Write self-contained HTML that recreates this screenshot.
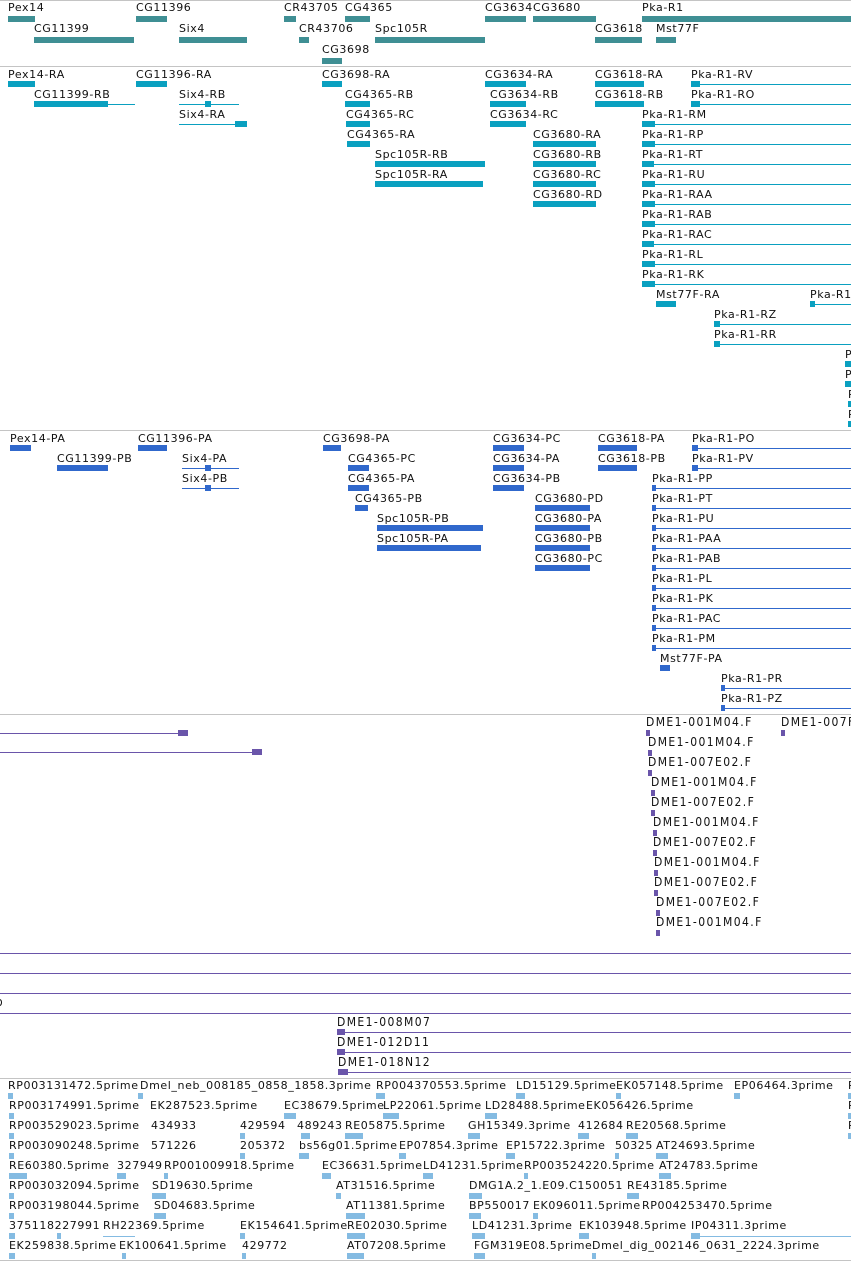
<!DOCTYPE html>
<html><head><meta charset="utf-8"><style>
body{margin:0;width:851px;height:1262px;overflow:hidden;background:#fff;position:relative;font-family:"DejaVu Sans","Liberation Sans",sans-serif}
.t{position:absolute;font-size:11px;line-height:14px;letter-spacing:.6px;color:#111;white-space:nowrap}
.d{position:absolute;font-family:"DejaVu Sans Condensed","DejaVu Sans",sans-serif;font-stretch:condensed;font-size:12px;line-height:14px;letter-spacing:1.4px;color:#111;white-space:nowrap}
.b{position:absolute;height:6px}
.l{position:absolute;height:1px}
.h{position:absolute;left:0;width:851px;height:1px;background:#c4c4c4}
.g{background:#3f8f94}.c{background:#0aa0c0}.p{background:#3068cc}.u{background:#6a55aa}.e{background:#84bbe2}
</style></head><body>
<div class="h" style="top:0"></div>
<div class="h" style="top:66px"></div>
<div class="h" style="top:430px"></div>
<div class="h" style="top:714px"></div>
<div class="h" style="top:1078px"></div>
<div class="h" style="top:1260px"></div>

<div class="t" style="left:8px;top:1px">Pex14</div><div class="b g" style="left:8px;top:16px;width:27px"></div>
<div class="t" style="left:136px;top:1px">CG11396</div><div class="b g" style="left:136px;top:16px;width:31px"></div>
<div class="t" style="left:284px;top:1px">CR43705</div><div class="b g" style="left:284px;top:16px;width:12px"></div>
<div class="t" style="left:345px;top:1px">CG4365</div><div class="b g" style="left:345px;top:16px;width:25px"></div>
<div class="t" style="left:485px;top:1px">CG3634</div><div class="b g" style="left:485px;top:16px;width:41px"></div>
<div class="t" style="left:533px;top:1px">CG3680</div><div class="b g" style="left:533px;top:16px;width:63px"></div>
<div class="t" style="left:642px;top:1px">Pka-R1</div><div class="b g" style="left:642px;top:16px;width:209px"></div>
<div class="t" style="left:34px;top:22px">CG11399</div><div class="b g" style="left:34px;top:37px;width:100px"></div>
<div class="t" style="left:179px;top:22px">Six4</div><div class="b g" style="left:179px;top:37px;width:68px"></div>
<div class="t" style="left:299px;top:22px">CR43706</div><div class="b g" style="left:299px;top:37px;width:10px"></div>
<div class="t" style="left:375px;top:22px">Spc105R</div><div class="b g" style="left:375px;top:37px;width:110px"></div>
<div class="t" style="left:595px;top:22px">CG3618</div><div class="b g" style="left:595px;top:37px;width:47px"></div>
<div class="t" style="left:656px;top:22px">Mst77F</div><div class="b g" style="left:656px;top:37px;width:20px"></div>
<div class="t" style="left:322px;top:43px">CG3698</div><div class="b g" style="left:322px;top:58px;width:20px"></div>

<div class="t" style="left:8px;top:68px">Pex14-RA</div><div class="b c" style="left:8px;top:81px;width:27px"></div>
<div class="t" style="left:136px;top:68px">CG11396-RA</div><div class="b c" style="left:136px;top:81px;width:31px"></div>
<div class="t" style="left:322px;top:68px">CG3698-RA</div><div class="b c" style="left:322px;top:81px;width:20px"></div>
<div class="t" style="left:485px;top:68px">CG3634-RA</div><div class="b c" style="left:485px;top:81px;width:41px"></div>
<div class="t" style="left:595px;top:68px">CG3618-RA</div><div class="b c" style="left:595px;top:81px;width:49px"></div>
<div class="t" style="left:691px;top:68px">Pka-R1-RV</div><div class="b c" style="left:691px;top:81px;width:9px"></div><div class="l c" style="left:691px;top:84px;width:160px"></div>
<div class="t" style="left:34px;top:88px">CG11399-RB</div><div class="b c" style="left:34px;top:101px;width:74px"></div><div class="l c" style="left:34px;top:104px;width:101px"></div>
<div class="t" style="left:179px;top:88px">Six4-RB</div><div class="l c" style="left:179px;top:104px;width:60px"></div><div class="b c" style="left:205px;top:101px;width:6px"></div>
<div class="t" style="left:345px;top:88px">CG4365-RB</div><div class="b c" style="left:345px;top:101px;width:25px"></div>
<div class="t" style="left:490px;top:88px">CG3634-RB</div><div class="b c" style="left:490px;top:101px;width:36px"></div>
<div class="t" style="left:595px;top:88px">CG3618-RB</div><div class="b c" style="left:595px;top:101px;width:49px"></div>
<div class="t" style="left:691px;top:88px">Pka-R1-RO</div><div class="b c" style="left:691px;top:101px;width:9px"></div><div class="l c" style="left:691px;top:104px;width:160px"></div>
<div class="t" style="left:179px;top:108px">Six4-RA</div><div class="l c" style="left:179px;top:124px;width:68px"></div><div class="b c" style="left:235px;top:121px;width:12px"></div>
<div class="t" style="left:346px;top:108px">CG4365-RC</div><div class="b c" style="left:346px;top:121px;width:24px"></div>
<div class="t" style="left:490px;top:108px">CG3634-RC</div><div class="b c" style="left:490px;top:121px;width:36px"></div>
<div class="t" style="left:642px;top:108px">Pka-R1-RM</div><div class="b c" style="left:642px;top:121px;width:13px"></div><div class="l c" style="left:642px;top:124px;width:209px"></div>
<div class="t" style="left:347px;top:128px">CG4365-RA</div><div class="b c" style="left:347px;top:141px;width:23px"></div>
<div class="t" style="left:533px;top:128px">CG3680-RA</div><div class="b c" style="left:533px;top:141px;width:63px"></div>
<div class="t" style="left:642px;top:128px">Pka-R1-RP</div><div class="b c" style="left:642px;top:141px;width:13px"></div><div class="l c" style="left:642px;top:144px;width:209px"></div>
<div class="t" style="left:375px;top:148px">Spc105R-RB</div><div class="b c" style="left:375px;top:161px;width:110px"></div>
<div class="t" style="left:533px;top:148px">CG3680-RB</div><div class="b c" style="left:533px;top:161px;width:63px"></div>
<div class="t" style="left:642px;top:148px">Pka-R1-RT</div><div class="b c" style="left:642px;top:161px;width:12px"></div><div class="l c" style="left:642px;top:164px;width:209px"></div>
<div class="t" style="left:375px;top:168px">Spc105R-RA</div><div class="b c" style="left:375px;top:181px;width:108px"></div>
<div class="t" style="left:533px;top:168px">CG3680-RC</div><div class="b c" style="left:533px;top:181px;width:63px"></div>
<div class="t" style="left:642px;top:168px">Pka-R1-RU</div><div class="b c" style="left:642px;top:181px;width:13px"></div><div class="l c" style="left:642px;top:184px;width:209px"></div>
<div class="t" style="left:533px;top:188px">CG3680-RD</div><div class="b c" style="left:533px;top:201px;width:63px"></div>
<div class="t" style="left:642px;top:188px">Pka-R1-RAA</div><div class="b c" style="left:642px;top:201px;width:13px"></div><div class="l c" style="left:642px;top:204px;width:209px"></div>
<div class="t" style="left:642px;top:208px">Pka-R1-RAB</div><div class="b c" style="left:642px;top:221px;width:13px"></div><div class="l c" style="left:642px;top:224px;width:209px"></div>
<div class="t" style="left:642px;top:228px">Pka-R1-RAC</div><div class="b c" style="left:642px;top:241px;width:12px"></div><div class="l c" style="left:642px;top:244px;width:209px"></div>
<div class="t" style="left:642px;top:248px">Pka-R1-RL</div><div class="b c" style="left:642px;top:261px;width:13px"></div><div class="l c" style="left:642px;top:264px;width:209px"></div>
<div class="t" style="left:642px;top:268px">Pka-R1-RK</div><div class="b c" style="left:642px;top:281px;width:13px"></div><div class="l c" style="left:642px;top:284px;width:209px"></div>
<div class="t" style="left:656px;top:288px">Mst77F-RA</div><div class="b c" style="left:656px;top:301px;width:20px"></div>
<div class="t" style="left:810px;top:288px">Pka-R1</div><div class="b c" style="left:810px;top:301px;width:5px"></div><div class="l c" style="left:810px;top:304px;width:41px"></div>
<div class="t" style="left:714px;top:308px">Pka-R1-RZ</div><div class="b c" style="left:714px;top:321px;width:6px"></div><div class="l c" style="left:714px;top:324px;width:137px"></div>
<div class="t" style="left:714px;top:328px">Pka-R1-RR</div><div class="b c" style="left:714px;top:341px;width:6px"></div><div class="l c" style="left:714px;top:344px;width:137px"></div>
<div class="t" style="left:845px;top:348px">P</div><div class="b c" style="left:845px;top:361px;width:6px"></div>
<div class="t" style="left:845px;top:368px">P</div><div class="b c" style="left:845px;top:381px;width:6px"></div>
<div class="t" style="left:848px;top:388px">P</div><div class="b c" style="left:848px;top:401px;width:3px"></div>
<div class="t" style="left:848px;top:408px">P</div><div class="b c" style="left:848px;top:421px;width:3px"></div>

<div class="t" style="left:10px;top:432px">Pex14-PA</div><div class="b p" style="left:10px;top:445px;width:21px"></div>
<div class="t" style="left:138px;top:432px">CG11396-PA</div><div class="b p" style="left:138px;top:445px;width:29px"></div>
<div class="t" style="left:323px;top:432px">CG3698-PA</div><div class="b p" style="left:323px;top:445px;width:18px"></div>
<div class="t" style="left:493px;top:432px">CG3634-PC</div><div class="b p" style="left:493px;top:445px;width:31px"></div>
<div class="t" style="left:598px;top:432px">CG3618-PA</div><div class="b p" style="left:598px;top:445px;width:39px"></div>
<div class="t" style="left:692px;top:432px">Pka-R1-PO</div><div class="b p" style="left:692px;top:445px;width:6px"></div><div class="l p" style="left:692px;top:448px;width:159px"></div>
<div class="t" style="left:57px;top:452px">CG11399-PB</div><div class="b p" style="left:57px;top:465px;width:51px"></div>
<div class="t" style="left:182px;top:452px">Six4-PA</div><div class="l p" style="left:182px;top:468px;width:57px"></div><div class="b p" style="left:205px;top:465px;width:6px"></div>
<div class="t" style="left:348px;top:452px">CG4365-PC</div><div class="b p" style="left:348px;top:465px;width:21px"></div>
<div class="t" style="left:493px;top:452px">CG3634-PA</div><div class="b p" style="left:493px;top:465px;width:31px"></div>
<div class="t" style="left:598px;top:452px">CG3618-PB</div><div class="b p" style="left:598px;top:465px;width:39px"></div>
<div class="t" style="left:692px;top:452px">Pka-R1-PV</div><div class="b p" style="left:692px;top:465px;width:6px"></div><div class="l p" style="left:692px;top:468px;width:159px"></div>
<div class="t" style="left:182px;top:472px">Six4-PB</div><div class="l p" style="left:182px;top:488px;width:57px"></div><div class="b p" style="left:205px;top:485px;width:6px"></div>
<div class="t" style="left:348px;top:472px">CG4365-PA</div><div class="b p" style="left:348px;top:485px;width:21px"></div>
<div class="t" style="left:493px;top:472px">CG3634-PB</div><div class="b p" style="left:493px;top:485px;width:31px"></div>
<div class="t" style="left:652px;top:472px">Pka-R1-PP</div><div class="b p" style="left:652px;top:485px;width:4px"></div><div class="l p" style="left:652px;top:488px;width:199px"></div>
<div class="t" style="left:355px;top:492px">CG4365-PB</div><div class="b p" style="left:355px;top:505px;width:13px"></div>
<div class="t" style="left:535px;top:492px">CG3680-PD</div><div class="b p" style="left:535px;top:505px;width:55px"></div>
<div class="t" style="left:652px;top:492px">Pka-R1-PT</div><div class="b p" style="left:652px;top:505px;width:4px"></div><div class="l p" style="left:652px;top:508px;width:199px"></div>
<div class="t" style="left:377px;top:512px">Spc105R-PB</div><div class="b p" style="left:377px;top:525px;width:106px"></div>
<div class="t" style="left:535px;top:512px">CG3680-PA</div><div class="b p" style="left:535px;top:525px;width:55px"></div>
<div class="t" style="left:652px;top:512px">Pka-R1-PU</div><div class="b p" style="left:652px;top:525px;width:4px"></div><div class="l p" style="left:652px;top:528px;width:199px"></div>
<div class="t" style="left:377px;top:532px">Spc105R-PA</div><div class="b p" style="left:377px;top:545px;width:104px"></div>
<div class="t" style="left:535px;top:532px">CG3680-PB</div><div class="b p" style="left:535px;top:545px;width:55px"></div>
<div class="t" style="left:652px;top:532px">Pka-R1-PAA</div><div class="b p" style="left:652px;top:545px;width:4px"></div><div class="l p" style="left:652px;top:548px;width:199px"></div>
<div class="t" style="left:535px;top:552px">CG3680-PC</div><div class="b p" style="left:535px;top:565px;width:55px"></div>
<div class="t" style="left:652px;top:552px">Pka-R1-PAB</div><div class="b p" style="left:652px;top:565px;width:4px"></div><div class="l p" style="left:652px;top:568px;width:199px"></div>
<div class="t" style="left:652px;top:572px">Pka-R1-PL</div><div class="b p" style="left:652px;top:585px;width:4px"></div><div class="l p" style="left:652px;top:588px;width:199px"></div>
<div class="t" style="left:652px;top:592px">Pka-R1-PK</div><div class="b p" style="left:652px;top:605px;width:4px"></div><div class="l p" style="left:652px;top:608px;width:199px"></div>
<div class="t" style="left:652px;top:612px">Pka-R1-PAC</div><div class="b p" style="left:652px;top:625px;width:4px"></div><div class="l p" style="left:652px;top:628px;width:199px"></div>
<div class="t" style="left:652px;top:632px">Pka-R1-PM</div><div class="b p" style="left:652px;top:645px;width:4px"></div><div class="l p" style="left:652px;top:648px;width:199px"></div>
<div class="t" style="left:660px;top:652px">Mst77F-PA</div><div class="b p" style="left:660px;top:665px;width:10px"></div>
<div class="t" style="left:721px;top:672px">Pka-R1-PR</div><div class="b p" style="left:721px;top:685px;width:4px"></div><div class="l p" style="left:721px;top:688px;width:130px"></div>
<div class="t" style="left:721px;top:692px">Pka-R1-PZ</div><div class="b p" style="left:721px;top:705px;width:4px"></div><div class="l p" style="left:721px;top:708px;width:130px"></div>

<div class="l u" style="left:0;top:733px;width:182px"></div><div class="b u" style="left:178px;top:730px;width:10px"></div>
<div class="l u" style="left:0;top:752px;width:256px"></div><div class="b u" style="left:252px;top:749px;width:10px"></div>
<div class="d" style="left:646px;top:715px">DME1-001M04.F</div><div class="b u" style="left:646px;top:730px;width:4px"></div>
<div class="d" style="left:781px;top:715px">DME1-007F</div><div class="b u" style="left:781px;top:730px;width:4px"></div>
<div class="d" style="left:648px;top:735px">DME1-001M04.F</div><div class="b u" style="left:648px;top:750px;width:4px"></div>
<div class="d" style="left:648px;top:755px">DME1-007E02.F</div><div class="b u" style="left:648px;top:770px;width:4px"></div>
<div class="d" style="left:651px;top:775px">DME1-001M04.F</div><div class="b u" style="left:651px;top:790px;width:4px"></div>
<div class="d" style="left:651px;top:795px">DME1-007E02.F</div><div class="b u" style="left:651px;top:810px;width:4px"></div>
<div class="d" style="left:653px;top:815px">DME1-001M04.F</div><div class="b u" style="left:653px;top:830px;width:4px"></div>
<div class="d" style="left:653px;top:835px">DME1-007E02.F</div><div class="b u" style="left:653px;top:850px;width:4px"></div>
<div class="d" style="left:654px;top:855px">DME1-001M04.F</div><div class="b u" style="left:654px;top:870px;width:4px"></div>
<div class="d" style="left:654px;top:875px">DME1-007E02.F</div><div class="b u" style="left:654px;top:890px;width:4px"></div>
<div class="d" style="left:656px;top:895px">DME1-007E02.F</div><div class="b u" style="left:656px;top:910px;width:4px"></div>
<div class="d" style="left:656px;top:915px">DME1-001M04.F</div><div class="b u" style="left:656px;top:930px;width:4px"></div>
<div class="l u" style="left:0;top:953px;width:851px"></div>
<div class="l u" style="left:0;top:973px;width:851px"></div>
<div class="l u" style="left:0;top:993px;width:851px"></div>
<div class="d" style="left:-4px;top:995px">o</div>
<div class="l u" style="left:0;top:1013px;width:851px"></div>
<div class="d" style="left:337px;top:1015px">DME1-008M07</div><div class="b u" style="left:337px;top:1029px;width:8px"></div><div class="l u" style="left:337px;top:1032px;width:514px"></div>
<div class="d" style="left:337px;top:1035px">DME1-012D11</div><div class="b u" style="left:337px;top:1049px;width:8px"></div><div class="l u" style="left:337px;top:1052px;width:514px"></div>
<div class="d" style="left:338px;top:1055px">DME1-018N12</div><div class="b u" style="left:338px;top:1069px;width:10px"></div><div class="l u" style="left:338px;top:1072px;width:513px"></div>

<div class="t" style="left:8px;top:1079px">RP003131472.5prime</div><div class="b e" style="left:8px;top:1093px;width:5px"></div>
<div class="t" style="left:140px;top:1079px">Dmel_neb_008185_0858_1858.3prime</div><div class="b e" style="left:138px;top:1093px;width:5px"></div>
<div class="t" style="left:376px;top:1079px">RP004370553.5prime</div><div class="b e" style="left:376px;top:1093px;width:9px"></div>
<div class="t" style="left:516px;top:1079px">LD15129.5prime</div><div class="b e" style="left:516px;top:1093px;width:9px"></div>
<div class="t" style="left:616px;top:1079px">EK057148.5prime</div><div class="b e" style="left:616px;top:1093px;width:5px"></div>
<div class="t" style="left:734px;top:1079px">EP06464.3prime</div><div class="b e" style="left:734px;top:1093px;width:6px"></div>
<div class="t" style="left:848px;top:1079px">R</div><div class="b e" style="left:848px;top:1093px;width:3px"></div>

<div class="t" style="left:9px;top:1099px">RP003174991.5prime</div><div class="b e" style="left:9px;top:1113px;width:5px"></div>
<div class="t" style="left:150px;top:1099px">EK287523.5prime</div>
<div class="t" style="left:284px;top:1099px">EC38679.5prime</div><div class="b e" style="left:284px;top:1113px;width:12px"></div>
<div class="t" style="left:383px;top:1099px">LP22061.5prime</div><div class="b e" style="left:383px;top:1113px;width:16px"></div>
<div class="t" style="left:485px;top:1099px">LD28488.5prime</div><div class="b e" style="left:485px;top:1113px;width:12px"></div>
<div class="t" style="left:586px;top:1099px">EK056426.5prime</div>
<div class="t" style="left:848px;top:1099px">R</div><div class="b e" style="left:848px;top:1113px;width:3px"></div>

<div class="t" style="left:9px;top:1119px">RP003529023.5prime</div><div class="b e" style="left:9px;top:1133px;width:5px"></div>
<div class="t" style="left:151px;top:1119px">434933</div>
<div class="t" style="left:240px;top:1119px">429594</div><div class="b e" style="left:240px;top:1133px;width:5px"></div>
<div class="t" style="left:297px;top:1119px">489243</div><div class="b e" style="left:301px;top:1133px;width:9px"></div>
<div class="t" style="left:345px;top:1119px">RE05875.5prime</div><div class="b e" style="left:345px;top:1133px;width:18px"></div>
<div class="t" style="left:468px;top:1119px">GH15349.3prime</div><div class="b e" style="left:468px;top:1133px;width:12px"></div>
<div class="t" style="left:578px;top:1119px">412684</div><div class="b e" style="left:578px;top:1133px;width:11px"></div>
<div class="t" style="left:626px;top:1119px">RE20568.5prime</div><div class="b e" style="left:626px;top:1133px;width:12px"></div>
<div class="t" style="left:848px;top:1119px">R</div><div class="b e" style="left:848px;top:1133px;width:3px"></div>

<div class="t" style="left:9px;top:1139px">RP003090248.5prime</div><div class="b e" style="left:9px;top:1153px;width:5px"></div>
<div class="t" style="left:151px;top:1139px">571226</div>
<div class="t" style="left:240px;top:1139px">205372</div><div class="b e" style="left:240px;top:1153px;width:5px"></div>
<div class="t" style="left:299px;top:1139px">bs56g01.5prime</div><div class="b e" style="left:299px;top:1153px;width:10px"></div>
<div class="t" style="left:399px;top:1139px">EP07854.3prime</div><div class="b e" style="left:399px;top:1153px;width:7px"></div>
<div class="t" style="left:506px;top:1139px">EP15722.3prime</div><div class="b e" style="left:506px;top:1153px;width:9px"></div>
<div class="t" style="left:615px;top:1139px">50325</div><div class="b e" style="left:615px;top:1153px;width:4px"></div>
<div class="t" style="left:656px;top:1139px">AT24693.5prime</div><div class="b e" style="left:656px;top:1153px;width:12px"></div>

<div class="t" style="left:9px;top:1159px">RE60380.5prime</div><div class="b e" style="left:9px;top:1173px;width:18px"></div>
<div class="t" style="left:117px;top:1159px">327949</div><div class="b e" style="left:117px;top:1173px;width:9px"></div>
<div class="t" style="left:164px;top:1159px">RP001009918.5prime</div><div class="b e" style="left:164px;top:1173px;width:4px"></div>
<div class="t" style="left:322px;top:1159px">EC36631.5prime</div><div class="b e" style="left:322px;top:1173px;width:9px"></div>
<div class="t" style="left:423px;top:1159px">LD41231.5prime</div><div class="b e" style="left:423px;top:1173px;width:10px"></div>
<div class="t" style="left:524px;top:1159px">RP003524220.5prime</div><div class="b e" style="left:524px;top:1173px;width:4px"></div>
<div class="t" style="left:659px;top:1159px">AT24783.5prime</div><div class="b e" style="left:659px;top:1173px;width:12px"></div>

<div class="t" style="left:9px;top:1179px">RP003032094.5prime</div><div class="b e" style="left:9px;top:1193px;width:5px"></div>
<div class="t" style="left:152px;top:1179px">SD19630.5prime</div><div class="b e" style="left:152px;top:1193px;width:14px"></div>
<div class="t" style="left:336px;top:1179px">AT31516.5prime</div><div class="b e" style="left:336px;top:1193px;width:5px"></div>
<div class="t" style="left:469px;top:1179px">DMG1A.2_1.E09.C150051</div><div class="b e" style="left:469px;top:1193px;width:13px"></div>
<div class="t" style="left:627px;top:1179px">RE43185.5prime</div><div class="b e" style="left:627px;top:1193px;width:12px"></div>

<div class="t" style="left:9px;top:1199px">RP003198044.5prime</div><div class="b e" style="left:9px;top:1213px;width:5px"></div>
<div class="t" style="left:154px;top:1199px">SD04683.5prime</div><div class="b e" style="left:154px;top:1213px;width:12px"></div>
<div class="t" style="left:346px;top:1199px">AT11381.5prime</div><div class="b e" style="left:346px;top:1213px;width:19px"></div>
<div class="t" style="left:469px;top:1199px">BP550017</div><div class="b e" style="left:469px;top:1213px;width:12px"></div>
<div class="t" style="left:533px;top:1199px">EK096011.5prime</div><div class="b e" style="left:533px;top:1213px;width:5px"></div>
<div class="t" style="left:642px;top:1199px">RP004253470.5prime</div>

<div class="t" style="left:9px;top:1219px">375118227991</div><div class="b e" style="left:9px;top:1233px;width:6px"></div>
<div class="t" style="left:103px;top:1219px">RH22369.5prime</div><div class="l e" style="left:103px;top:1236px;width:32px"></div><div class="b e" style="left:57px;top:1233px;width:4px"></div>
<div class="t" style="left:240px;top:1219px">EK154641.5prime</div><div class="b e" style="left:240px;top:1233px;width:5px"></div>
<div class="t" style="left:347px;top:1219px">RE02030.5prime</div><div class="b e" style="left:347px;top:1233px;width:18px"></div>
<div class="t" style="left:472px;top:1219px">LD41231.3prime</div><div class="b e" style="left:472px;top:1233px;width:13px"></div>
<div class="t" style="left:579px;top:1219px">EK103948.5prime</div><div class="b e" style="left:579px;top:1233px;width:10px"></div>
<div class="t" style="left:691px;top:1219px">IP04311.3prime</div><div class="b e" style="left:691px;top:1233px;width:9px"></div><div class="l e" style="left:691px;top:1236px;width:160px"></div>

<div class="t" style="left:9px;top:1239px">EK259838.5prime</div><div class="b e" style="left:9px;top:1253px;width:6px"></div>
<div class="t" style="left:119px;top:1239px">EK100641.5prime</div><div class="b e" style="left:122px;top:1253px;width:4px"></div>
<div class="t" style="left:242px;top:1239px">429772</div><div class="b e" style="left:242px;top:1253px;width:4px"></div>
<div class="t" style="left:347px;top:1239px">AT07208.5prime</div><div class="b e" style="left:347px;top:1253px;width:17px"></div>
<div class="t" style="left:474px;top:1239px">FGM319E08.5prime</div><div class="b e" style="left:474px;top:1253px;width:11px"></div>
<div class="t" style="left:592px;top:1239px">Dmel_dig_002146_0631_2224.3prime</div><div class="b e" style="left:592px;top:1253px;width:4px"></div>
</body></html>
